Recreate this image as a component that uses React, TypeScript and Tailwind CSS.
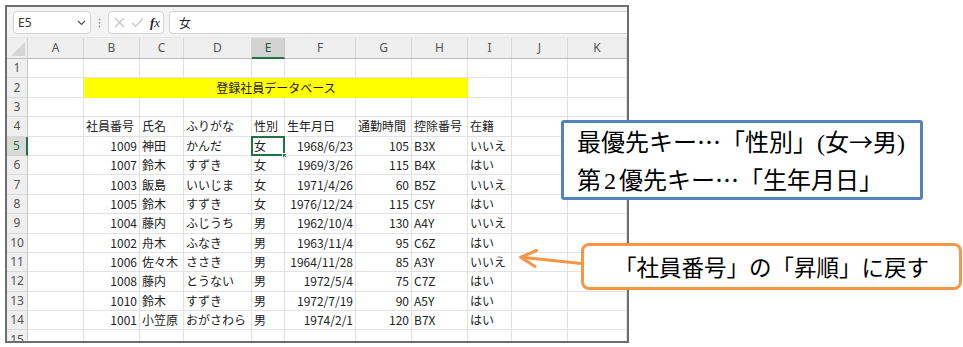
import React from "react";

const GRID =
  "grid grid-cols-[21px_56px_56px_44px_68px_33px_71px_56px_56px_44px_56px_1fr]";

const letters = ["A", "B", "C", "D", "E", "F", "G", "H", "I", "J", "K"];

type Row = [string, string, string, string, string, string, string, string];

const header: Row = ["社員番号", "氏名", "ふりがな", "性別", "生年月日", "通勤時間", "控除番号", "在籍"];

const data: Row[] = [
  ["1009", "神田", "かんだ", "女", "1968/6/23", "105", "B3X", "いいえ"],
  ["1007", "鈴木", "すずき", "女", "1969/3/26", "115", "B4X", "はい"],
  ["1003", "飯島", "いいじま", "女", "1971/4/26", "60", "B5Z", "いいえ"],
  ["1005", "鈴木", "すずき", "女", "1976/12/24", "115", "C5Y", "はい"],
  ["1004", "藤内", "ふじうち", "男", "1962/10/4", "130", "A4Y", "いいえ"],
  ["1002", "舟木", "ふなき", "男", "1963/11/4", "95", "C6Z", "はい"],
  ["1006", "佐々木", "ささき", "男", "1964/11/28", "85", "A3Y", "いいえ"],
  ["1008", "藤内", "とうない", "男", "1972/5/4", "75", "C7Z", "はい"],
  ["1010", "鈴木", "すずき", "男", "1972/7/19", "90", "A5Y", "はい"],
  ["1001", "小笠原", "おがさわら", "男", "1974/2/1", "120", "B7X", "はい"],
];

const cellFont = "font-['Noto_Sans_CJK_JP',sans-serif] text-[12px] text-[#222]";
const gl = "border-b border-r border-[#e2e2e2]";
const cjk = "font-['Noto_Sans_CJK_JP',sans-serif]";

function RowHead({ n, active }: { n: number; active?: boolean }) {
  return (
    <div
      className={
        active
          ? "flex items-center justify-center bg-[#d9d9d9] border-r-2 border-r-[#217346] border-b border-b-[#d0d0d0] text-[#217346] text-[12px] font-['Noto_Sans',sans-serif]"
          : "flex items-center justify-center bg-[#efefef] border-r border-r-[#c8c8c8] border-b border-b-[#dadada] text-[#555] text-[12px] font-['Noto_Sans',sans-serif]"
      }
    >
      {n}
    </div>
  );
}

function Cell({
  text,
  right,
  selected,
}: {
  text?: string;
  right?: boolean;
  selected?: boolean;
}) {
  return (
    <div
      className={`relative flex items-center overflow-visible whitespace-nowrap ${gl} ${cellFont} ${
        right ? "justify-end pr-[2px]" : "pl-[2px]"
      }`}
    >
      {text}
      {selected && (
        <>
          <div className="absolute left-[-1px] top-[-1px] right-[-1px] bottom-[-1px] border-2 border-[#217346]" />
          <div className="absolute right-[-3px] bottom-[-3px] w-[5px] h-[5px] bg-[#217346] border border-white" />
        </>
      )}
    </div>
  );
}

function EmptyRow({ n }: { n: number }) {
  return (
    <div className={`${GRID} h-[19.4px] shrink-0`}>
      <RowHead n={n} />
      {letters.map((l) => (
        <Cell key={l} />
      ))}
    </div>
  );
}

export default function App() {
  return (
    <div className="relative w-[963px] h-[347px] bg-white overflow-hidden">
      {/* Excel frame */}
      <div className="ml-[5px] mt-[5px] w-[624px] h-[338px] border-2 border-[#6e6e6e] overflow-hidden flex flex-col bg-white">
        {/* formula bar */}
        <div className="h-[30px] shrink-0 bg-[#f3f3f3] flex items-start pt-[4px] pl-[6px] gap-0">
          <div className="w-[78px] h-[23px] bg-white border border-[#d4d4d4] rounded-[4px] flex items-center justify-between pl-[4px] pr-[4px]">
            <span className="text-[12px] text-[#333] font-['Noto_Sans',sans-serif]">E5</span>
            <svg width="9" height="6" viewBox="0 0 9 6">
              <path d="M1 1 L4.5 4.5 L8 1" fill="none" stroke="#555" strokeWidth="1.2" />
            </svg>
          </div>
          <div className="w-[17px] h-[23px] flex items-center justify-center">
            <svg width="3" height="10" viewBox="0 0 3 10">
              <circle cx="1.5" cy="1.5" r="0.9" fill="#999" />
              <circle cx="1.5" cy="5" r="0.9" fill="#999" />
              <circle cx="1.5" cy="8.5" r="0.9" fill="#999" />
            </svg>
          </div>
          <div className="w-[56px] h-[23px] bg-white border border-[#d4d4d4] rounded-[4px] flex items-center pl-[5px] gap-[6px]">
            <svg width="11" height="11" viewBox="0 0 11 11">
              <path d="M1 1 L10 10 M10 1 L1 10" stroke="#c2c2c2" strokeWidth="1.1" fill="none" />
            </svg>
            <svg width="13" height="11" viewBox="0 0 13 11">
              <path d="M1 6 L4.5 9.5 L12 1.5" stroke="#c2c2c2" strokeWidth="1.1" fill="none" />
            </svg>
            <span className="text-[13px] italic font-['Liberation_Serif',serif] text-[#222] leading-none">
              <span className="font-bold">f</span>x
            </span>
          </div>
          <div className="ml-[5px] flex-1 -mr-[4px] h-[23px] bg-white border border-[#d4d4d4] rounded-[4px] flex items-center pl-[9px]">
            <span className={cellFont}>女</span>
          </div>
        </div>
        {/* column headers */}
        <div className={`${GRID} h-[22px] shrink-0 border-t border-t-[#e4e4e4]`}>
          <div className="relative bg-[#efefef] border-r border-r-[#d0d0d0] border-b border-b-[#bdbdbd]">
            <svg className="absolute right-[2px] bottom-[2px]" width="14" height="14" viewBox="0 0 14 14">
              <polygon points="14,0 14,14 0,14" fill="#d6d6d6" />
            </svg>
          </div>
          {letters.map((l) =>
            l === "E" ? (
              <div
                key={l}
                className="flex items-center justify-center bg-[#d3d3d3] border-r border-r-[#c8c8c8] border-b-2 border-b-[#217346] text-[12px] text-[#1f5c3a] font-['Noto_Sans',sans-serif]"
              >
                {l}
              </div>
            ) : (
              <div
                key={l}
                className="flex items-center justify-center bg-[#efefef] border-r border-r-[#d6d6d6] border-b border-b-[#bdbdbd] text-[12px] text-[#555] font-['Noto_Sans',sans-serif]"
              >
                {l}
              </div>
            )
          )}
        </div>
        <EmptyRow n={1} />
        {/* row 2 title */}
        <div className={`${GRID} h-[19.4px] shrink-0`}>
          <RowHead n={2} />
          <Cell />
          <div className={`col-span-7 flex items-center justify-center bg-[#ffff00] ${cellFont} text-[#3a3a1a]`}>
            登録社員データベース
          </div>
          <Cell />
          <Cell />
          <Cell />
        </div>
        <EmptyRow n={3} />
        {/* row 4 header */}
        <div className={`${GRID} h-[19.4px] shrink-0`}>
          <RowHead n={4} />
          <Cell />
          {header.map((h, i) => (
            <Cell key={i} text={h} />
          ))}
          <Cell />
          <Cell />
        </div>
        {data.map((r, i) => (
          <div key={i} className={`${GRID} h-[19.4px] shrink-0`}>
            <RowHead n={i + 5} active={i === 0} />
            <Cell />
            <Cell text={r[0]} right />
            <Cell text={r[1]} />
            <Cell text={r[2]} />
            <Cell text={r[3]} selected={i === 0} />
            <Cell text={r[4]} right />
            <Cell text={r[5]} right />
            <Cell text={r[6]} />
            <Cell text={r[7]} />
            <Cell />
            <Cell />
          </div>
        ))}
        <EmptyRow n={15} />
      </div>

      {/* blue callout */}
      <div className="absolute left-[561px] top-[120px] w-[362px] h-[80px] border-[3px] border-[#5581bc] rounded-[3px] bg-white pl-[13px] font-['Liberation_Serif','Noto_Sans_CJK_JP',serif] text-[24px] leading-[36px] text-black whitespace-nowrap">
        <div>
          最優先キー<span className={cjk}>…</span>「性別」(女<span className={cjk}>→</span>男)
        </div>
        <div>
          第<span className="mx-[3px]">2</span>優先キー<span className={cjk}>…</span>「生年月日」
        </div>
      </div>

      {/* orange callout */}
      <div className="absolute left-[581px] top-[243px] w-[381px] h-[47px] border-[3px] border-[#f79646] rounded-[8px] bg-white flex items-center justify-center font-['Noto_Sans_CJK_JP',sans-serif] text-[22.5px] text-black whitespace-nowrap">
        「社員番号」の「昇順」に戻す
      </div>

      {/* arrow */}
      <svg className="absolute left-0 top-0" width="963" height="347" viewBox="0 0 963 347">
        <path d="M581 263.5 L522 257.3" stroke="#f79646" strokeWidth="3" fill="none" strokeLinecap="round" />
        <path d="M536.5 250.5 L520.5 257.3 L535 266.5" stroke="#f79646" strokeWidth="3" fill="none" strokeLinecap="round" strokeLinejoin="round" />
      </svg>
    </div>
  );
}
